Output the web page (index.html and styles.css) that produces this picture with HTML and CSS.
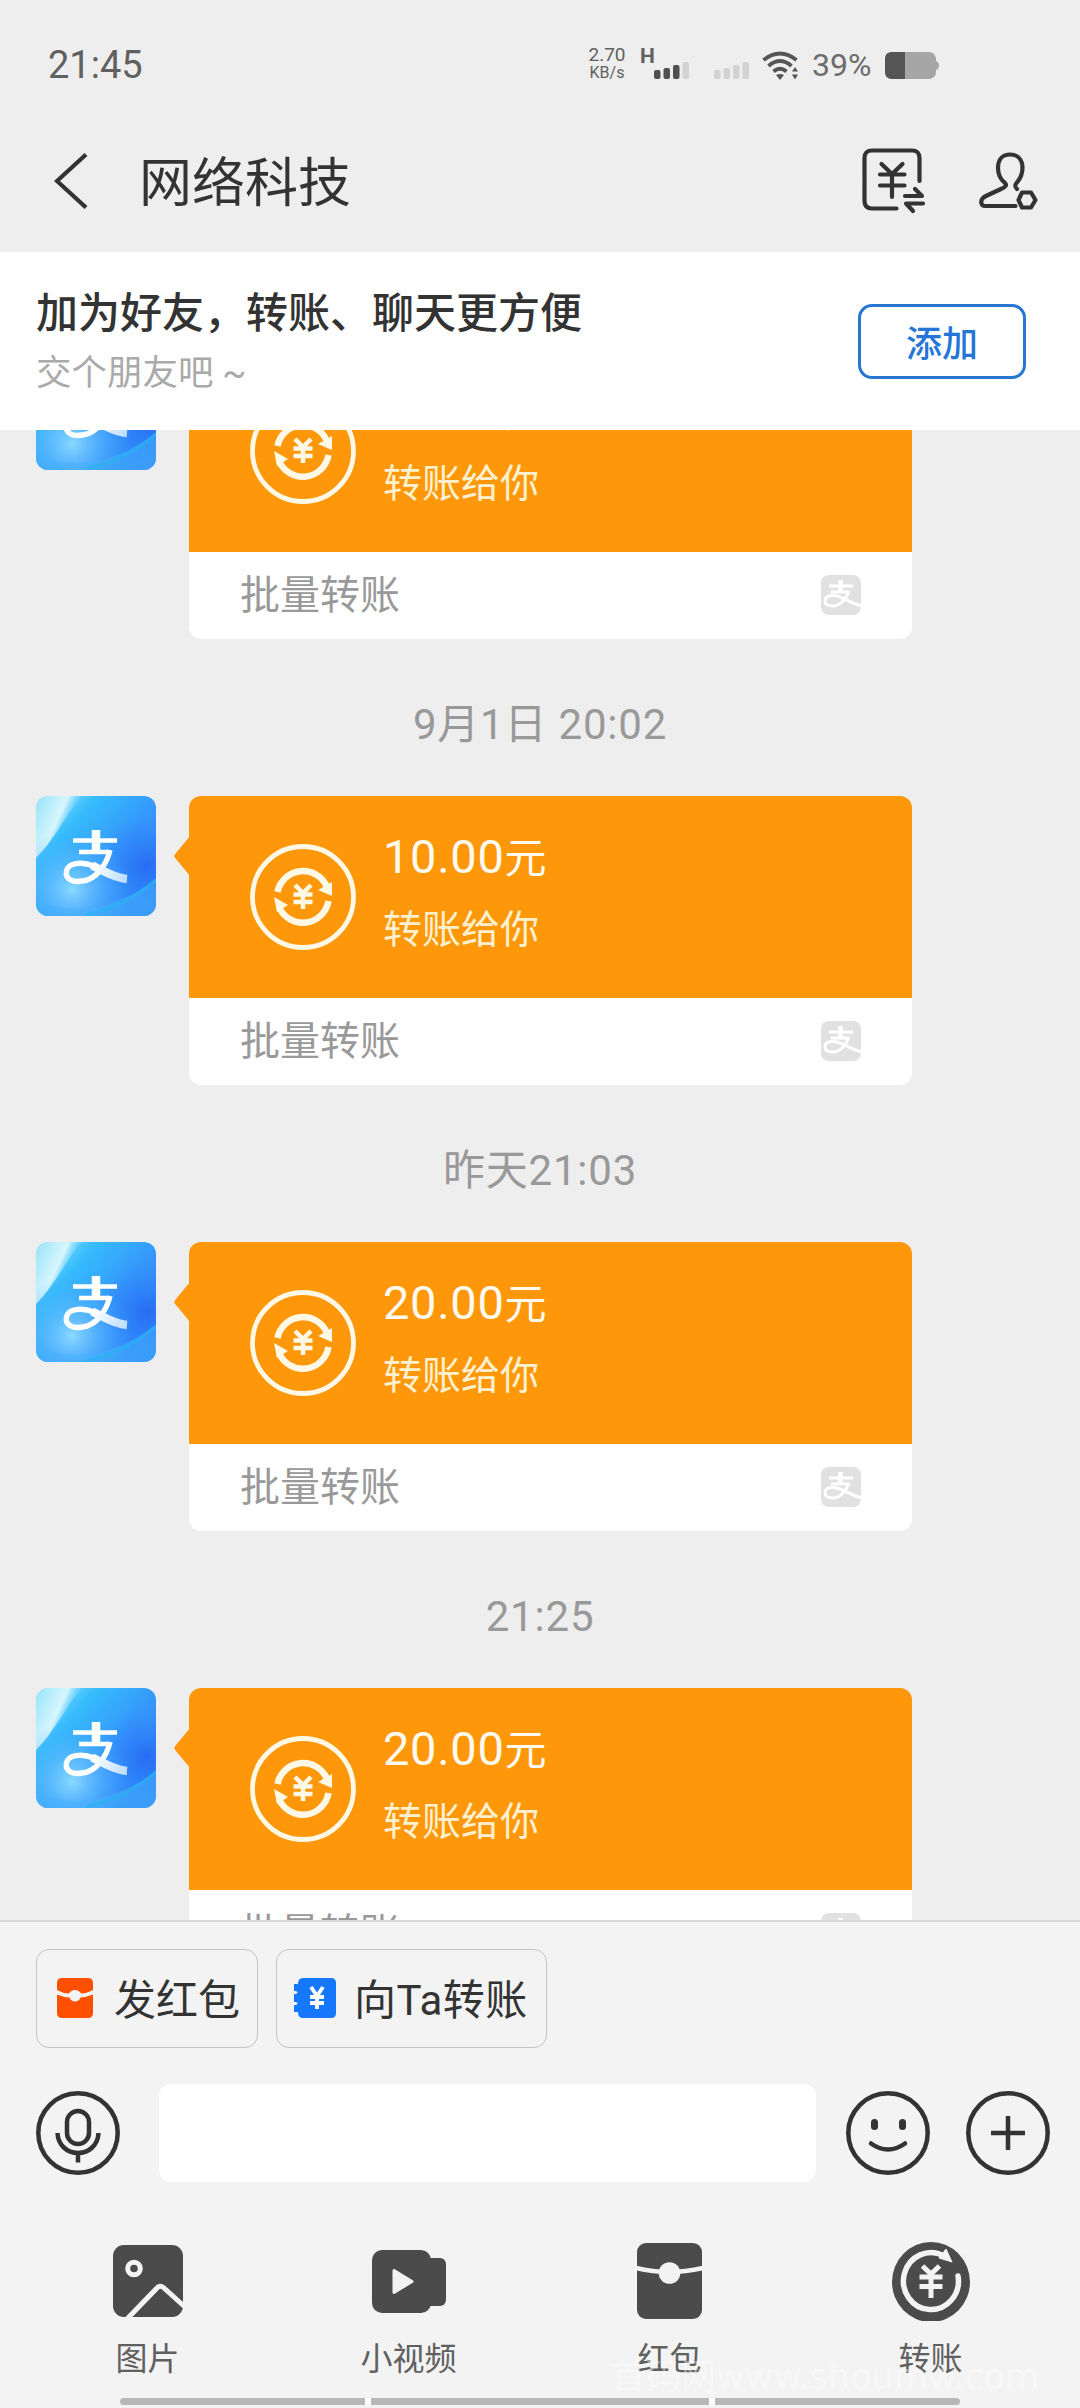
FILE: index.html
```html
<!DOCTYPE html>
<html lang="zh-CN">
<head>
<meta charset="utf-8">
<title>网络科技</title>
<link rel="stylesheet" href="styles.css">
</head>
<body>
<svg class="defs" width="0" height="0" aria-hidden="true">
  <defs>
    <linearGradient id="sky" x1="0" y1="0" x2="1" y2=".9">
      <stop offset="0" stop-color="#a8ecff"/><stop offset=".28" stop-color="#36bcfb"/>
      <stop offset=".6" stop-color="#3596fb"/><stop offset="1" stop-color="#2f86f6"/>
    </linearGradient>
    <radialGradient id="glow" cx=".3" cy=".78" r=".5">
      <stop offset="0" stop-color="#8fdcff" stop-opacity=".95"/><stop offset="1" stop-color="#3aa5ff" stop-opacity="0"/>
    </radialGradient>
    <radialGradient id="deep" cx=".92" cy=".58" r=".42">
      <stop offset="0" stop-color="#2360f2" stop-opacity=".75"/><stop offset="1" stop-color="#2f80fb" stop-opacity="0"/>
    </radialGradient>
    <linearGradient id="beam" gradientUnits="userSpaceOnUse" x1="0" y1="10" x2="36" y2="26">
      <stop offset="0" stop-color="#9fe6fa"/><stop offset=".65" stop-color="#d8f6fd"/><stop offset="1" stop-color="#7fd9fb" stop-opacity="0"/>
    </linearGradient>
    <linearGradient id="leg" gradientUnits="userSpaceOnUse" x1="58" y1="70" x2="92" y2="84">
      <stop offset="0" stop-color="#fff"/><stop offset="1" stop-color="#b9dcff"/>
    </linearGradient>
  </defs>
  <symbol id="avatar" viewBox="0 0 120 120">
    <rect width="120" height="120" fill="url(#sky)"/>
    <path d="M0 0H46C30 18 20 42 0 62Z" fill="url(#beam)"/>
    <rect width="120" height="120" fill="url(#deep)"/>
    <rect width="120" height="120" fill="url(#glow)"/>
    <path d="M0 104C40 124 90 108 120 82V120H0Z" fill="#45b2fb" opacity=".5"/>
    <path d="M50 119C82 112 104 98 120 84" fill="none" stroke="#25b4ee" stroke-width="3" opacity=".6"/>
    <g fill="none" stroke="#fff">
      <path d="M37 44.5H81M43 56H73" stroke-width="4.6"/>
      <path d="M60 34V56" stroke-width="8.5"/>
      <path d="M74 54C71 67 61 84 46 85C35 87 29 82 30.500 75C32 67 45 65 58 70" stroke-width="5.4"/>
      <path d="M56 69.500C68 75 78 82 91 83" stroke="url(#leg)" stroke-width="8.5"/>
    </g>
  </symbol>
  <symbol id="paymark" viewBox="0 0 40 40">
    <rect width="40" height="40" rx="8" fill="#e1e1e1"/>
    <g fill="none" stroke="#fff" stroke-width="3">
      <path d="M8 11H32M10 17H28"/><path d="M19.500 5V17" stroke-width="4.500"/>
      <path d="M28 16C26 22 20 31 12 31C7 31 4 29 4 26C4 22 8 20 13 20.500C22 21.500 29 28 41 31"/>
    </g>
  </symbol>
  <symbol id="coin" viewBox="0 0 106 106">
    <g fill="none" stroke="#fff8e6">
      <circle cx="53" cy="53" r="50.500" stroke-width="4.800"/>
      <path d="M27.500 48A26 26 0 0 1 77 43M78.500 57A26 26 0 0 1 29 63" stroke-width="6.500"/>
      <path d="M45 41L53 49L61 41M53 49V65M43.500 50.500H62.500M43.500 58H62.500" stroke-width="4.500"/>
    </g>
    <path d="M82 38V52L68 46ZM24 53L38 61L27 68Z" fill="#fff8e6"/>
  </symbol>
</svg>
<div class="screen">
  <div class="status">
    <span class="clock">21:45</span>
    <div class="rate"><span>2.70</span><span>KB/s</span></div>
    <span class="net">H</span>
    <svg class="bars" viewBox="0 0 36 17"><g fill="#505050"><rect x="0" y="8" width="6.500" height="9" rx="2"/><rect x="9.500" y="6" width="6.500" height="11" rx="2"/><rect x="19" y="3" width="6.500" height="14" rx="2"/></g><rect x="28.500" y="0" width="6.500" height="17" rx="2" fill="#d2d2d2"/></svg>
    <svg class="bars bars2" viewBox="0 0 36 17"><g fill="#d2d2d2"><rect x="0" y="8" width="6.500" height="9" rx="2"/><rect x="9.500" y="6" width="6.500" height="11" rx="2"/><rect x="19" y="3" width="6.500" height="14" rx="2"/><rect x="28.500" y="0" width="6.500" height="17" rx="2"/></g></svg>
    <svg class="wifi" viewBox="0 0 37 29"><g fill="none" stroke="#555" stroke-width="3.800"><path d="M1.500 9Q18 -4 34.500 9"/><path d="M6.500 15Q18 5 29.500 15"/><path d="M11.500 20.500Q18 15 24.500 20.500"/></g><path d="M14 24Q18 22 22 24L18 29ZM30 20.500L33 16L36 20.500ZM30 23.500H36L33 28.500Z" fill="#555"/></svg>
    <span class="percent">39%</span>
    <svg class="battery" viewBox="0 0 54 27"><rect width="51" height="27" rx="7" fill="#a6a6a6"/><path d="M20 0H7Q0 0 0 7V20Q0 27 7 27H20Z" fill="#555"/><path d="M51 9Q54 10 54 13.500Q54 17 51 18Z" fill="#a6a6a6"/></svg>
  </div>
  <header class="header">
    <svg class="back" viewBox="0 0 34 56"><path d="M32 1.500L3 28L32 54.500" fill="none" stroke="#333" stroke-width="4.200"/></svg>
    <h1>网络科技</h1>
    <svg class="bill" viewBox="0 0 64 66"><g fill="none" stroke="#333" stroke-width="4.200" stroke-linecap="round" stroke-linejoin="round"><path d="M57.500 33V10Q57.500 2.500 50 2.500H10Q2.500 2.500 2.500 10V53Q2.500 60.500 10 60.500H34.500"/><path d="M19.500 16L30 26L40.500 16M30 26V49M18 26.500H42.500M18 37.500H42.500M43 48H60L53 41M61 55.500H44L51 63"/></g></svg>
    <svg class="person" viewBox="0 0 60 58"><g fill="none" stroke="#333" stroke-width="4.200" stroke-linecap="round" stroke-linejoin="round"><path d="M36.500 54H6C2 54 1 49 4 46C5 45 6 44.500 8 43.500L22 37C27 35 28 33 26 31C21 27 19 22 19 16C19 7 24 2.500 31 2.500S43.500 7 43.500 16C43.500 22 42 26 37.500 31C35.500 33.500 36 35 38 37"/><path d="M43 40.500H52L56.500 48L52 55.500H43L39.500 48Z"/></g></svg>
  </header>
  <section class="banner">
    <div class="invite"><strong>加为好友，转账、聊天更方便</strong><span>交个朋友吧 ~</span></div>
    <button class="add">添加</button>
  </section>
  <main class="chat">
    <div class="message">
      <svg class="avatar"><use href="#avatar"/></svg>
      <article class="card">
        <div class="pay"><svg class="coin"><use href="#coin"/></svg><div class="info"><b>20.00<em>元</em></b><span>转账给你</span></div></div>
        <div class="foot"><span>批量转账</span><svg class="mark"><use href="#paymark"/></svg></div>
      </article>
    </div>
    <time>9月1日 20:02</time>
    <div class="message">
      <svg class="avatar"><use href="#avatar"/></svg>
      <article class="card">
        <div class="pay"><svg class="coin"><use href="#coin"/></svg><div class="info"><b>10.00<em>元</em></b><span>转账给你</span></div></div>
        <div class="foot"><span>批量转账</span><svg class="mark"><use href="#paymark"/></svg></div>
      </article>
    </div>
    <time>昨天21:03</time>
    <div class="message">
      <svg class="avatar"><use href="#avatar"/></svg>
      <article class="card">
        <div class="pay"><svg class="coin"><use href="#coin"/></svg><div class="info"><b>20.00<em>元</em></b><span>转账给你</span></div></div>
        <div class="foot"><span>批量转账</span><svg class="mark"><use href="#paymark"/></svg></div>
      </article>
    </div>
    <time>21:25</time>
    <div class="message">
      <svg class="avatar"><use href="#avatar"/></svg>
      <article class="card">
        <div class="pay"><svg class="coin"><use href="#coin"/></svg><div class="info"><b>20.00<em>元</em></b><span>转账给你</span></div></div>
        <div class="foot"><span>批量转账</span><svg class="mark"><use href="#paymark"/></svg></div>
      </article>
    </div>
  </main>
  <footer class="panel">
    <div class="chips">
      <button class="chip red"><svg viewBox="0 0 36 40"><path d="M0 12V5Q0 0 5 0H31Q36 0 36 5V12Q29 15.500 24 15.500Q22 12 18 12T12 15.500Q6 15.500 0 12ZM0 16.500Q6 19 12.500 19.500Q14 23.500 18 23.500T23.500 19.500Q30 19 36 16.500V35Q36 40 31 40H5Q0 40 0 35Z" fill="#fe5000"/></svg><span>发红包</span></button>
      <button class="chip blue"><svg viewBox="0 0 42 40"><path d="M9 0H37Q42 0 42 5V35Q42 40 37 40H9Q4 40 4 34H0V27H2Q5 25.500 2 24H0V16H2Q5 14.500 2 13H0V6H4Q4 0 9 0Z" fill="#1677ff"/><path d="M17 9L23 18L29 9M23 18V31M16 19H30M16 25H30" fill="none" stroke="#fff" stroke-width="3.800"/></svg><span>向Ta转账</span></button>
    </div>
    <div class="compose">
      <svg class="round" viewBox="0 0 84 84"><g fill="none" stroke="#333" stroke-width="4.500"><circle cx="42" cy="42" r="39.700"/><rect x="31" y="20" width="22" height="33" rx="11"/><path d="M21.500 42C22 54 31 62 42 62S62 54 62.500 42M42 62V71.500"/></g></svg>
      <div class="input"></div>
      <svg class="round smile" viewBox="0 0 84 84"><circle cx="42" cy="42" r="39.700" fill="none" stroke="#333" stroke-width="4.500"/><g fill="#333"><rect x="25" y="28" width="7" height="11" rx="3.500"/><rect x="53" y="28" width="7" height="11" rx="3.500"/></g><path d="M25 52.500Q42 64.500 59 52.500" fill="none" stroke="#333" stroke-width="4.500" stroke-linecap="round"/></svg>
      <svg class="round plus" viewBox="0 0 84 84"><g fill="none" stroke="#333" stroke-width="4.500"><circle cx="42" cy="42" r="39.700"/><path d="M42 25V59M25 42H59"/></g></svg>
    </div>
    <nav class="tools">
      <div class="tool"><svg viewBox="0 0 80 80"><rect x="5" y="4" width="70" height="72" rx="11" fill="#4b4b4b"/><circle cx="26" cy="27.500" r="6.300" fill="none" stroke="#f3f3f3" stroke-width="5"/><path d="M19 78L48 48Q52 43 56 47L77 66" fill="none" stroke="#f3f3f3" stroke-width="5"/></svg><span>图片</span></div>
      <div class="tool"><svg viewBox="0 0 80 80"><rect x="3" y="9" width="59" height="63" rx="10" fill="#4b4b4b"/><rect x="48" y="17" width="29" height="48" rx="6" fill="#4b4b4b"/><path d="M25 29.500L43 40.500L25 51.500Z" fill="#f3f3f3" stroke="#f3f3f3" stroke-width="3" stroke-linejoin="round"/></svg><span>小视频</span></div>
      <div class="tool"><svg viewBox="0 0 80 80"><rect x="7" y="2" width="65" height="76" rx="9" fill="#4b4b4b"/><path d="M6 27Q23 31 39 31T73 27" fill="none" stroke="#f3f3f3" stroke-width="4.500"/><circle cx="39.500" cy="32" r="10.800" fill="#f3f3f3"/></svg><span>红包</span></div>
      <div class="tool"><svg viewBox="0 0 80 80"><ellipse cx="40" cy="41" rx="39" ry="40" fill="#4b4b4b"/><path d="M67 35A27.500 28.500 0 1 1 53 15" fill="none" stroke="#f3f3f3" stroke-width="5.500" stroke-linecap="round"/><path d="M55 8L61 21L48 17Z" fill="#f3f3f3" stroke="#f3f3f3"/><path d="M31.500 25L40 33L48.500 25M40 33V57M28.500 36H51.500M28.500 45.500H51.500" fill="none" stroke="#f3f3f3" stroke-width="5"/></svg><span>转账</span></div>
    </nav>
    <div class="gestures"><i></i><i></i><i></i></div>
    <div class="watermark">首码网www.shoumw.com</div>
  </footer>
</div>
</body>
</html>
```
FILE: styles.css
```css
* { box-sizing: border-box; }
body { margin: 0; background: #eee; color: #333; font-family: Roboto, "Noto Sans CJK SC", sans-serif; }
svg { display: block; flex: none; }
button { margin: 0; font: inherit; background: none; }
.defs { position: absolute; }
.screen { width: 1080px; height: 2408px; overflow: hidden; display: flex; flex-direction: column; }

.status { height: 130px; padding: 0 141px 0 48px; display: flex; align-items: center; color: #606060; }
.clock { font-size: 38px; line-height: 44px; flex: 1; }
.rate { width: 40px; display: flex; flex-direction: column; align-items: center; font-size: 19px; line-height: 18px; margin: -3px 13px 0 0; }
.rate span:last-child { font-size: 16px; }
.net { font-size: 21px; line-height: 22px; font-weight: 700; width: 14px; margin-top: -19px; }
.bars { width: 36px; height: 17px; margin-top: 10px; }
.bars2 { margin-left: 24px; }
.wifi { width: 37px; height: 29px; margin-left: 12px; }
.percent { font-size: 32px; width: 65px; margin-left: 13px; line-height: 36px; color: #6c6c6c; }
.battery { width: 54px; height: 27px; margin-left: 8px; }

.header { height: 122px; padding: 0 41px 0 54px; display: flex; align-items: center; }
.back { width: 34px; height: 56px; margin-top: -21px; }
h1 { flex: 1; margin: -15px 0 0 51px; font-size: 53px; line-height: 72px; font-weight: 400; }
.bill { width: 64px; height: 66px; margin: -20px 53px 0 0; }
.person { width: 60px; height: 58px; margin-top: -20px; }

.banner { height: 178px; padding: 0 54px 0 36px; background: #fff; display: flex; align-items: center; justify-content: space-between; }
.invite { display: flex; flex-direction: column; padding-top: 2px; }
.invite strong { font-size: 42px; line-height: 62px; font-weight: 500; }
.invite span { font-size: 35.500px; line-height: 56px; color: #aaa; }
.add { width: 168px; height: 75px; border: 3px solid #2676d2; border-radius: 14px; color: #2676d9; font-size: 36px; font-weight: 500; padding: 0; }

.chat { height: 1490px; overflow: hidden; display: flex; flex-direction: column; }
.message { flex: none; height: 289px; padding-left: 36px; display: flex; gap: 33px; align-items: flex-start; }
.message:first-child { margin-top: -80px; }
.avatar { width: 120px; height: 120px; border-radius: 12px; }
.card { position: relative; width: 723px; height: 289px; }
.card::before { content: ""; position: absolute; left: -15px; top: 40px; width: 16px; height: 40px; background: #fe980a; clip-path: polygon(100% 0, 10% 44%, 0 50%, 10% 56%, 100% 100%); }
.pay { height: 202px; padding: 29px 0 0 61px; border-radius: 12px 12px 0 0; background: #fe980a; display: flex; gap: 27px; }
.coin { width: 106px; height: 106px; margin-top: 19px; }
.info { display: flex; flex-direction: column; }
.info b { height: 64px; font-size: 47px; line-height: 64px; font-weight: 400; color: #fffaf0; letter-spacing: .7px; }
.info em { font-size: 42px; font-style: normal; line-height: 1; }
.info span { font-size: 39px; line-height: 58px; color: #fff0d0; margin-top: 12px; }
.foot { height: 87px; padding: 0 51px; border-radius: 0 0 12px 12px; background: #fff; display: flex; align-items: center; justify-content: space-between; }
.foot span { font-size: 40px; line-height: 60px; color: #999; }
.mark { width: 40px; height: 40px; margin-top: -2px; }
time { flex: none; height: 157px; padding-top: 56px; text-align: center; font-size: 42px; line-height: 60px; color: #999; letter-spacing: .8px; }

.panel { position: relative; flex: none; height: 488px; border-top: 2px solid #d6d6d6; background: #f3f3f3; display: flex; flex-direction: column; }
.chips { display: flex; gap: 18px; padding: 27px 36px 0; }
.chip { height: 99px; border: 1px solid #c4c4c4; border-radius: 13px; display: flex; align-items: center; color: #333; font-size: 42px; line-height: 60px; }
.chip span { padding-top: 5px; }
.red { width: 222px; padding: 0 0 0 20px; gap: 21px; }
.blue { width: 271px; padding: 0 0 0 17px; gap: 18px; }
.blue span { letter-spacing: .4px; }
.red svg { width: 36px; height: 40px; margin-top: -2px; }
.blue svg { width: 42px; height: 40px; margin-top: -2px; }
.compose { margin-top: 36px; height: 98px; padding: 0 30px 0 36px; display: flex; align-items: center; }
.round { width: 84px; height: 84px; }
.input { flex: 1; height: 98px; margin: 0 30px 0 39px; border-radius: 12px; background: #fff; }
.plus { margin: -1px 0 0 36px; }
.tools { display: grid; grid-template-columns: repeat(4, 1fr); padding: 0 19px 0 17px; margin-top: 59px; }
.tool { display: flex; flex-direction: column; align-items: center; font-size: 32px; line-height: 48px; color: #606060; }
.tool svg { width: 80px; height: 80px; }
.tool span { margin-top: 14px; }
.gestures { height: 7px; margin: 15px 120px 0; display: grid; grid-template-columns: 245px 338px 245px; gap: 6px; background: #fff; border-radius: 4px; }
.gestures i { background: #b8b8b8; }
.gestures i:first-child { border-radius: 4px 0 0 4px; }
.gestures i:last-child { border-radius: 0 4px 4px 0; }
.watermark { position: absolute; left: 611px; top: 430px; font: 35px/50px "DejaVu Sans", "Noto Sans CJK SC", sans-serif; color: rgba(255,255,255,.4); white-space: nowrap; }
```
